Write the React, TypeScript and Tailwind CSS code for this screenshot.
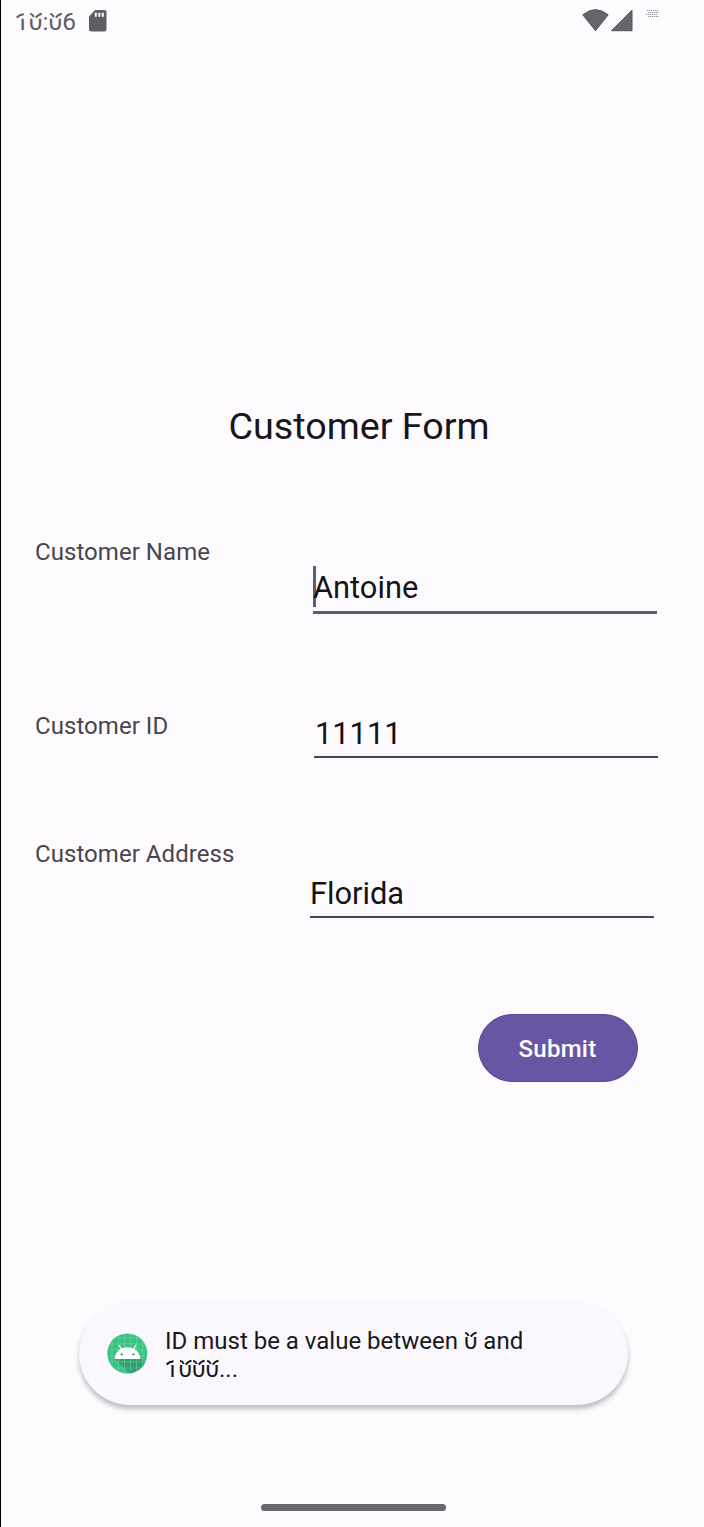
import React from "react";

/* Digit whose upper edge is broken off and redrawn as two loose strokes. */
function BrokenDigit({ digit }: { digit: "0" | "1" }) {
  return (
    <span className="relative inline-block">
      <span className="inline-block [clip-path:inset(0.44em_0_0_0)]">{digit}</span>
      <svg
        className="absolute left-0 top-[0.22em] h-[0.3em] w-full overflow-visible"
        viewBox="0 0 14 7"
        fill="none"
        stroke="currentColor"
        strokeWidth="2"
        aria-hidden="true"
      >
        {digit === "0" ? (
          <path d="M1.200 .4Q3.500 1 5 3.800M13 .6Q9.300 1.200 7 4.600" />
        ) : (
          <path d="M1.800 4.600Q4 1.400 8.900 1" />
        )}
      </svg>
    </span>
  );
}

function StatusBar() {
  return (
    <header className="flex h-[45px] shrink-0 items-start pl-[14px] text-[#5f5d62]">
      <div className="mt-[8px] w-[73px] whitespace-nowrap text-[24.5px] leading-[28px]">
        <BrokenDigit digit="1" />
        <BrokenDigit digit="0" />:<BrokenDigit digit="0" />6
      </div>
      <svg className="mt-[9px] h-[23px] w-[19px]" viewBox="0 0 19 23" aria-hidden="true">
        <path
          fill="#5f5d62"
          fillRule="evenodd"
          d="M7 1h9.5A2 2 0 0 1 18.500 3v17.500a2 2 0 0 1-2 2h-13.500a2 2 0 0 1-2-2V7.500ZM6.800 3.800v4h2v-4ZM10.300 3.800v4h2v-4ZM13.800 3.800v4h2v-4Z"
        />
      </svg>
      <div className="ml-auto flex items-start pr-[44px]">
        <svg className="mt-[9px] h-[23px] w-[27px]" viewBox="0 0 27 23" aria-hidden="true">
          <path fill="#68666a" stroke="#545257" d="M.8 5.800Q13.500-4.500 26.200 5.800L13.500 21.700Z" />
        </svg>
        <svg className="ml-[1px] mt-[9px] h-[23px] w-[23px]" viewBox="0 0 23 23" aria-hidden="true">
          <path fill="#68666a" stroke="#545257" d="M1.500 21.700 22 1.200v20.500Z" />
        </svg>
        <svg className="ml-3 mt-[9px] h-[9px] w-[15px]" viewBox="0 0 15 9" aria-hidden="true">
          <path
            stroke="#8b898e"
            strokeWidth=".9"
            strokeDasharray="1.300 .7"
            d="M2 1.500h11M3 3.500h11M1 5.500h12M3 7.500h11"
          />
        </svg>
      </div>
    </header>
  );
}

function Label({ children }: { children: React.ReactNode }) {
  return (
    <label className="whitespace-nowrap text-[24px] leading-[28px] tracking-[0.05px] text-[#48454e]">
      {children}
    </label>
  );
}

function AndroidIcon() {
  return (
    <svg className="h-[41px] w-[41px] shrink-0" viewBox="0 0 41 41" aria-hidden="true">
      <defs>
        <clipPath id="disc">
          <circle cx="20.300" cy="20.500" r="20" />
        </clipPath>
      </defs>
      <g clipPath="url(#disc)">
        <path fill="#3ac285" d="M0 0h41v41H0Z" />
        <path fill="#2fa070" d="M8 26 23 41h12l6-8-7.500-7.500Z" />
        <path
          stroke="#8ce5bd"
          strokeOpacity=".6"
          strokeWidth=".6"
          d="M5 0v41M11.500 0v41M17.500 0v41M23.500 0v41M29.500 0v41M35.500 0v41M0 5h41M0 11h41M0 17h41M0 23h41M0 29h41M0 35h41"
        />
      </g>
      <path fill="#fff" d="M7.700 26a12.800 11.800 0 0 1 25.600 0Z" />
      <path stroke="#fff" strokeWidth="1.200" strokeLinecap="round" d="m14.500 16.500-2.200-4M26.500 16.500l2.200-4" />
      <circle cx="14.800" cy="21.300" r="1.100" fill="#3a8465" />
      <circle cx="26.400" cy="21.300" r="1.100" fill="#3a8465" />
    </svg>
  );
}

export default function App() {
  return (
    <div className="flex h-[1527px] w-[704px] flex-col overflow-hidden border-l border-black bg-[#fefbff] font-['Roboto',sans-serif]">
      <StatusBar />
      <main className="flex flex-1 flex-col">
        <h1 className="mt-[359px] pl-[13px] text-center text-[37.7px] leading-[44px] text-[#17161a]">
          Customer Form
        </h1>

        <form className="flex flex-col pl-[34px] text-[#141316]">
          <div className="mt-[90px] flex h-[76px] items-start">
            <div className="w-[278px] shrink-0">
              <Label>Customer Name</Label>
            </div>
            <div className="mt-[28px] w-[344px]">
              <div className="flex h-[45px] items-start">
                <span className="h-[41px] w-[3px] bg-[#625b71]" />
                <span className="-ml-[3px] mt-[4px] text-[30.8px] leading-[36px]">Antoine</span>
              </div>
              <div className="h-[3px] bg-[#625b71]" />
            </div>
          </div>

          <div className="mt-[98px] flex h-[47px] items-start">
            <div className="w-[279px] shrink-0">
              <Label>Customer ID</Label>
            </div>
            <div className="mt-[4px] w-[344px] border-b-2 border-[#4b4751] pb-[4px] pl-px text-[30.8px] leading-[36px]">
              11111
            </div>
          </div>

          <div className="mt-[81px] flex h-[78px] items-start">
            <div className="w-[275px] shrink-0">
              <Label>Customer Address</Label>
            </div>
            <div className="mt-[36px] w-[344px] border-b-2 border-[#4b4751] pb-[4px] text-[30.8px] leading-[36px]">
              Florida
            </div>
          </div>

          <button
            type="button"
            className="mt-[96px] mr-[66.5px] h-[68px] w-[160px] self-end rounded-full border border-[#5d4c94] bg-[#6856a5] pt-[2px] text-[24px] leading-[28px] font-medium tracking-[0.25px] text-white"
          >
            Submit
          </button>
        </form>

        <div
          role="status"
          className="mt-[220px] ml-[78px] flex h-[103px] w-[549px] items-center rounded-full bg-[#faf8fd] pl-[28px] shadow-[0_4px_5px_rgba(0,0,0,0.25)]"
        >
          <AndroidIcon />
          <p className="ml-[17px] pt-[2px] whitespace-nowrap text-[24px] leading-[28px] text-[#18171b]">
            ID must be a value between <BrokenDigit digit="0" /> and
            <br />
            <BrokenDigit digit="1" />
            <BrokenDigit digit="0" />
            <BrokenDigit digit="0" />
            <BrokenDigit digit="0" />
            ...
          </p>
        </div>
      </main>
      <div className="mb-[16px] ml-[260px] h-[7px] w-[185px] shrink-0 rounded-full bg-[#69676b]" />
    </div>
  );
}
